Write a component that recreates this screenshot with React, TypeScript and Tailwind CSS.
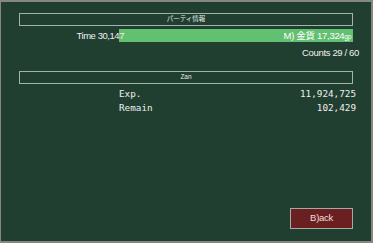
const sans = { fontFamily: '"Liberation Sans", Arial, "Noto Sans CJK JP", sans-serif' };

function TitleBox({ label }: { label: string }) {
  return (
    <div className="mx-[18px] h-[13px] border border-[#a3b3a6] flex items-center justify-center">
      <span className="text-[6.5px] leading-none text-[#e6ece6]">{label}</span>
    </div>
  );
}

export default function App() {
  return (
    <div
      className="w-[373px] h-[243px] bg-[#213f31] border-[#86887f] border-t-2 border-r-2 border-b-2 border-l flex flex-col text-[#eef0ee]"
      style={sans}
    >
      <div className="mt-[11px]">
        <TitleBox label="パーティ情報" />
      </div>

      <div className="mt-[3px] mx-[18px] flex h-[13px] items-center">
        <div className="w-[105px] shrink-0 text-right text-[9.5px] tracking-[-0.45px] relative z-10 -mr-[5px] leading-[13px]">
          Time 30,147
        </div>
        <div className="flex-1 h-[13px] bg-[#62c071] flex items-center justify-end pr-[2px] text-[9.5px] leading-none tracking-[-0.3px] text-white">
          M) 金貨 17,324<span className="text-[6.5px] self-end mb-[2px]">gp</span>
        </div>
      </div>

      <div className="mt-[5px] pr-[12px] text-right text-[9.5px] leading-[12px] tracking-[-0.35px]">
        Counts 29 / 60
      </div>

      <div className="mt-[12px]">
        <TitleBox label="Zan" />
      </div>

      <div
        className="mt-[3px] ml-[118px] mr-[15px] text-[9.3px] leading-[14px]"
        style={{ fontFamily: '"DejaVu Sans Mono", "Liberation Mono", monospace' }}
      >
        <div className="flex justify-between">
          <span>Exp.</span>
          <span>11,924,725</span>
        </div>
        <div className="flex justify-between">
          <span>Remain</span>
          <span>102,429</span>
        </div>
      </div>

      <div className="mt-auto mb-[12px] mr-[18px] flex justify-end">
        <button className="w-[63px] h-[21px] bg-[#6a1f20] border border-[#a8a8a4] text-[9.5px] text-[#f2dede] tracking-[-0.3px] flex items-center justify-center">
          B)ack
        </button>
      </div>
    </div>
  );
}
